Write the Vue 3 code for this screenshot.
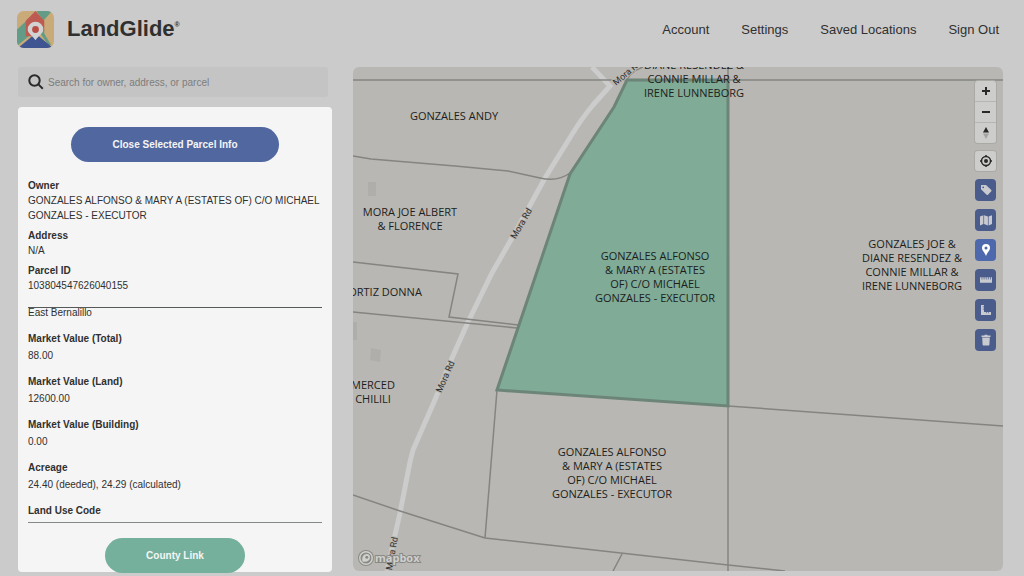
<script setup>
import { ref } from 'vue'

const query = ref('')

const nav = ['Account', 'Settings', 'Saved Locations', 'Sign Out']

const summary = [
  { label: 'Owner', value: 'GONZALES ALFONSO & MARY A (ESTATES OF) C/O MICHAEL GONZALES - EXECUTOR' },
  { label: 'Address', value: 'N/A' },
  { label: 'Parcel ID', value: '103804547626040155' },
]

const details = [
  { label: 'Market Value (Total)', value: '88.00' },
  { label: 'Market Value (Land)', value: '12600.00' },
  { label: 'Market Value (Building)', value: '0.00' },
  { label: 'Acreage', value: '24.40 (deeded), 24.29 (calculated)' },
  { label: 'Land Use Code', value: '' },
]

const boundaries = [
  'M353 80H1003',
  'M728 67V571',
  'M353 156L371 159L455 166L508 171L540 178Q558 182 570 173',
  'M624 86Q628 72 643 67',
  'M353 262L458 274L449 317L518 325',
  'M353 312L517 328',
  'M497 390L485 538',
  'M353 495L400 511L485 538L585 549L728 565L785 571',
  'M622 554L613 571',
  'M728 406L1003 426',
]

const road = 'M592 67L610 86L593 105Q582 118 571 136L545 178L512 238L492 273L468 322L452 358L434 402L413 450L410 462L400 513L395 535L387 571'

const parcels = [
  { x: 454, y: 120, lines: ['GONZALES ANDY'] },
  { x: 410, y: 216, lines: ['MORA JOE ALBERT', '& FLORENCE'] },
  { x: 385, y: 296, lines: ['ORTIZ DONNA'] },
  { x: 373, y: 389, lines: ['MERCED', 'CHILILI'] },
  { x: 694, y: 69, lines: ['DIANE RESENDEZ &', 'CONNIE MILLAR &', 'IRENE LUNNEBORG'] },
  { x: 655, y: 260, lines: ['GONZALES ALFONSO', '& MARY A (ESTATES', 'OF) C/O MICHAEL', 'GONZALES - EXECUTOR'] },
  { x: 612, y: 456, lines: ['GONZALES ALFONSO', '& MARY A (ESTATES', 'OF) C/O MICHAEL', 'GONZALES - EXECUTOR'] },
  { x: 912, y: 248, lines: ['GONZALES JOE &', 'DIANE RESENDEZ &', 'CONNIE MILLAR &', 'IRENE LUNNEBORG'] },
]

const roadLabels = [
  { x: 629, y: 75, angle: -40 },
  { x: 524, y: 225, angle: -60 },
  { x: 448, y: 378, angle: -66 },
  { x: 395, y: 554, angle: -80 },
]

const tools = [
  { name: 'Labels', path: 'M2 2.5v3.8l5.6 5.4a1 1 0 0 0 1.4 0l3.3-3.5a1 1 0 0 0 0-1.3L7 2H2.5zM4.2 3.4a.9.9 0 1 1 0 1.8.9.9 0 0 1 0-1.8z' },
  { name: 'Map style', path: 'M1 3.6L4.4 2.2V11L1 12.4zM5.1 2.2L8.9 3.6V12.4L5.1 11zM9.6 3.6L13 2.2V11L9.6 12.4z' },
  { name: 'Drop pin', active: true, path: 'M7 1a4 4 0 0 0-4 4c0 2.6 2.7 4.3 4 8 1.300-3.700 4-5.400 4-8a4 4 0 0 0-4-4zM7 3.500a1.500 1.500 0 1 1 0 3 1.500 1.500 0 0 1 0-3z' },
  { name: 'Measure distance', path: 'M1 4.200H2.600V6.500H3.300V4.200H4.700V6.500H5.400V4.200H6.800V6.500H7.500V4.200H8.900V6.500H9.600V4.200H11V6.500H11.700V4.200H13V9.800H1z' },
  { name: 'Measure area', path: 'M2 2H5V3.600H3.800V4.200H5V5.800H3.800V6.400H5V9H7.200V10.200H7.800V9H9.400V10.200H10V9H12V12H2z' },
  { name: 'Delete', path: 'M2.500 2.600H5.300L5.800 1.700H8.200L8.700 2.600H11.500V3.900H2.500zM3.200 4.600H10.800L10.400 11.800Q10.300 12.500 9.700 12.500H4.300Q3.700 12.500 3.600 11.800z' },
]
</script>

<template>
  <div class="page">
    <header class="header">
      <a class="brand" href="#">
        <svg class="logo" viewBox="0 0 38 38" aria-hidden="true">
          <defs><clipPath id="logo-shape"><rect width="38" height="38" rx="7" /></clipPath></defs>
          <g clip-path="url(#logo-shape)">
            <rect width="38" height="38" fill="#c9aa78" />
            <path d="M20 0H36L27 10Z" fill="#639c86" />
            <path d="M0 19L12 8V26L0 36Z" fill="#639c86" />
            <path d="M24 23L28 19V23L35 35H32Z" fill="#639c86" />
            <path d="M9 10L19 0L28 10V20L19 26L9 26Z" fill="#bd5b52" />
            <path d="M1 38L19 23L37 38Z" fill="#3f5592" />
            <path d="M19 11a8 8 0 0 0-8 8c0 4 4.500 6 8 11 3.500-5 8-7 8-11a8 8 0 0 0-8-8z" fill="#d3d2d2" />
            <circle cx="19" cy="19" r="3.500" fill="#b94d46" />
          </g>
        </svg>
        <span class="wordmark">LandGlide<sup>®</sup></span>
      </a>
      <nav class="nav">
        <a v-for="item in nav" :key="item" href="#">{{ item }}</a>
      </nav>
    </header>

    <main class="main">
      <aside class="sidebar">
        <label class="search">
          <svg viewBox="0 0 16 16" aria-hidden="true">
            <circle cx="6.500" cy="6.500" r="5.200" /><path d="M10.400 10.400L14.800 14.800" />
          </svg>
          <input v-model="query" type="text" aria-label="Search" placeholder="Search for owner, address, or parcel" />
        </label>

        <section class="card">
          <button class="pill close" type="button">Close Selected Parcel Info</button>
          <dl class="summary">
            <div v-for="row in summary" :key="row.label">
              <dt>{{ row.label }}</dt>
              <dd>{{ row.value }}</dd>
            </div>
          </dl>
          <p class="county">East Bernalillo</p>
          <dl class="details">
            <div v-for="row in details" :key="row.label">
              <dt>{{ row.label }}</dt>
              <dd v-if="row.value">{{ row.value }}</dd>
            </div>
          </dl>
          <button class="pill link" type="button">County Link</button>
        </section>
      </aside>

      <section class="map" aria-label="Parcel map">
        <svg class="canvas" viewBox="353 67 650 504" preserveAspectRatio="xMidYMid slice">
          <path class="building" d="M368 182H376V196H368zM371 348L381 350L380 362L370 360zM353 322H357V340H353z" />
          <path class="road" :d="road" />
          <path v-for="line in boundaries" :key="line" class="boundary" :d="line" />
          <path class="selected" d="M627 80H728V406L497 390L570 174L614 107Z" />
          <text
            v-for="label in roadLabels"
            :key="label.y"
            class="road-label"
            :transform="`translate(${label.x} ${label.y}) rotate(${label.angle})`"
          >Mora Rd</text>
          <text v-for="(p, i) in parcels" :key="i" class="parcel-label" :y="p.y">
            <tspan v-for="(line, n) in p.lines" :key="n" :x="p.x" :dy="n ? 14 : 0">{{ line }}</tspan>
          </text>
        </svg>

        <div class="controls">
          <div class="group">
            <button type="button" aria-label="Zoom in"><svg viewBox="0 0 14 14"><path class="stroke" d="M7 3V11M3 7H11" /></svg></button>
            <button type="button" aria-label="Zoom out"><svg viewBox="0 0 14 14"><path class="stroke" d="M3 7H11" /></svg></button>
            <button type="button" aria-label="Reset north"><svg viewBox="0 0 14 14"><path d="M7 1L10 6.500H4z" /><path class="south" d="M7 13L4 7.500H10z" /></svg></button>
          </div>
          <div class="group">
            <button type="button" aria-label="Find my location">
              <svg viewBox="0 0 14 14"><circle class="ring" cx="7" cy="7" r="4.500" /><circle cx="7" cy="7" r="2" /><path class="ring" d="M7 1V3M7 11V13M1 7H3M11 7H13" /></svg>
            </button>
          </div>
          <button v-for="tool in tools" :key="tool.name" type="button" class="tool" :class="{ active: tool.active }" :aria-label="tool.name">
            <svg viewBox="0 0 14 14"><path fill-rule="evenodd" :d="tool.path" /></svg>
          </button>
        </div>

        <a class="mapbox" href="#" aria-label="Mapbox">
          <svg viewBox="0 0 66 18">
            <circle class="shade" cx="9" cy="9" r="8" />
            <circle class="light" cx="9" cy="9" r="7" />
            <circle class="shade" cx="9" cy="9" r="5.500" />
            <path class="light" d="M5.500 12.500C4.500 8 6.500 5 9.800 5A3.500 3.500 0 0 1 13 8.500C13 11.500 10 13.500 5.500 12.500Z" />
            <circle class="shade" cx="9.800" cy="8.300" r="1.500" />
            <text x="18" y="13">mapbox</text>
          </svg>
        </a>
      </section>
    </main>
  </div>
</template>

<style>
body {
  background: #cbcbcb;
}
</style>

<style scoped>
.page {
  box-sizing: border-box;
  display: flex;
  flex-direction: column;
  min-height: 100vh;
  padding-bottom: 4px;
  background: #cbcbcb;
  color: #303030;
  font-family: "Liberation Sans", Arial, sans-serif;
  font-size: 10px;
}
a {
  color: inherit;
  text-decoration: none;
}
button {
  font: inherit;
  border: 0;
  padding: 0;
}
.header {
  display: flex;
  align-items: center;
  justify-content: space-between;
  height: 58px;
  padding: 0 25px 0 17px;
  margin-bottom: 9px;
}
.brand {
  display: flex;
  align-items: center;
  gap: 13px;
}
.logo {
  width: 37px;
  height: 37px;
}
.wordmark {
  font-size: 22px;
  line-height: 26px;
  font-weight: 700;
}
.wordmark sup {
  font-size: 7px;
  line-height: 7px;
  vertical-align: 9px;
}
.nav {
  display: flex;
  gap: 32px;
  font-size: 13px;
}
.main {
  display: flex;
  flex: 1;
  gap: 21px;
  padding: 0 21px 0 18px;
}
.sidebar {
  flex: none;
  width: 314px;
}
.search {
  box-sizing: border-box;
  display: flex;
  align-items: center;
  gap: 4px;
  height: 30px;
  margin: 0 4px 10px 0;
  padding: 0 10px;
  border-radius: 3px;
  background: #c4c4c4;
}
.search svg {
  width: 16px;
  height: 16px;
  fill: none;
  stroke: #2b2b2b;
  stroke-width: 2;
}
.search input {
  flex: 1;
  min-width: 0;
  border: 0;
  padding: 0;
  background: none;
  font: inherit;
  outline: none;
}
.search input::placeholder {
  color: #7d7d7d;
}
.card {
  padding: 20px 10px 1px;
  border-radius: 4px;
  background: #f5f5f5;
}
.pill {
  display: block;
  height: 35px;
  margin: 0 auto;
  border-radius: 18px;
  color: #f5f5f5;
  font-weight: 700;
}
.close {
  width: 208px;
  background: #5167a0;
}
.link {
  width: 140px;
  margin-bottom: -2px;
  background: #74b09c;
}
dl,
dd,
p {
  margin: 0;
}
dt {
  font-weight: 700;
}
.summary {
  display: grid;
  gap: 5px;
  padding: 16px 0 14px;
  border-bottom: 1px solid #555a58;
  line-height: 15px;
}
.county {
  line-height: 10px;
  margin-bottom: 13px;
}
.details {
  display: grid;
  gap: 10px;
  padding-bottom: 3px;
  margin-bottom: 15px;
  border-bottom: 1px solid #858985;
  line-height: 16px;
}
.details dd {
  line-height: 17px;
}
.map {
  position: relative;
  flex: 1;
  min-width: 0;
  margin-bottom: 1px;
  overflow: hidden;
  border-radius: 6px;
  background: #b8b7b3;
}
.canvas {
  position: absolute;
  width: 100%;
  height: 100%;
}
.building {
  fill: #afaeab;
}
.road {
  fill: none;
  stroke: #cbcccb;
  stroke-width: 5;
}
.boundary {
  fill: none;
  stroke: #858480;
  stroke-width: 1.500;
}
.selected {
  fill: #7fab97;
  stroke: #6d8479;
  stroke-width: 3;
}
.parcel-label {
  font-family: "Open Sans", "Noto Sans", sans-serif;
  font-size: 11px;
  text-anchor: middle;
  fill: #1c1e1c;
}
.road-label {
  font-family: Roboto, sans-serif;
  font-size: 9px;
  text-anchor: middle;
  fill: #30312f;
  stroke: #b8b7b3;
  stroke-width: 2;
  paint-order: stroke;
}
.controls {
  position: absolute;
  top: 14px;
  right: 7px;
  display: grid;
  gap: 8px;
  width: 21px;
}
.group {
  display: grid;
  gap: 1px;
  overflow: hidden;
  border-radius: 3px;
  background: #b5b5b4;
  box-shadow: 0 0 0 1px #aaa9a6;
}
.controls button {
  display: grid;
  place-items: center;
  height: 20px;
  background: #cdcdcc;
}
.controls svg {
  width: 14px;
  height: 14px;
  fill: #292929;
}
.stroke {
  stroke: #292929;
  stroke-width: 2;
}
.ring {
  fill: none;
  stroke: #292929;
  stroke-width: 1.500;
}
.south {
  fill: #a5a5a5;
}
.controls .tool {
  height: 22px;
  border-radius: 4px;
  background: #4a5c8c;
}
.controls .tool.active {
  background: #4d68ac;
}
.tool svg {
  fill: #c8cad0;
}
.tool.active svg {
  fill: #ffffff;
}
.mapbox {
  position: absolute;
  left: 4px;
  bottom: 4px;
  width: 66px;
  height: 18px;
}
.mapbox svg {
  display: block;
}
.shade {
  fill: #898986;
}
.light {
  fill: #d0d0cd;
}
.mapbox text {
  font-family: "Open Sans", sans-serif;
  font-size: 11px;
  font-weight: 700;
  fill: #d0d0cd;
  stroke: #898986;
  stroke-width: 2;
  paint-order: stroke;
}
</style>
